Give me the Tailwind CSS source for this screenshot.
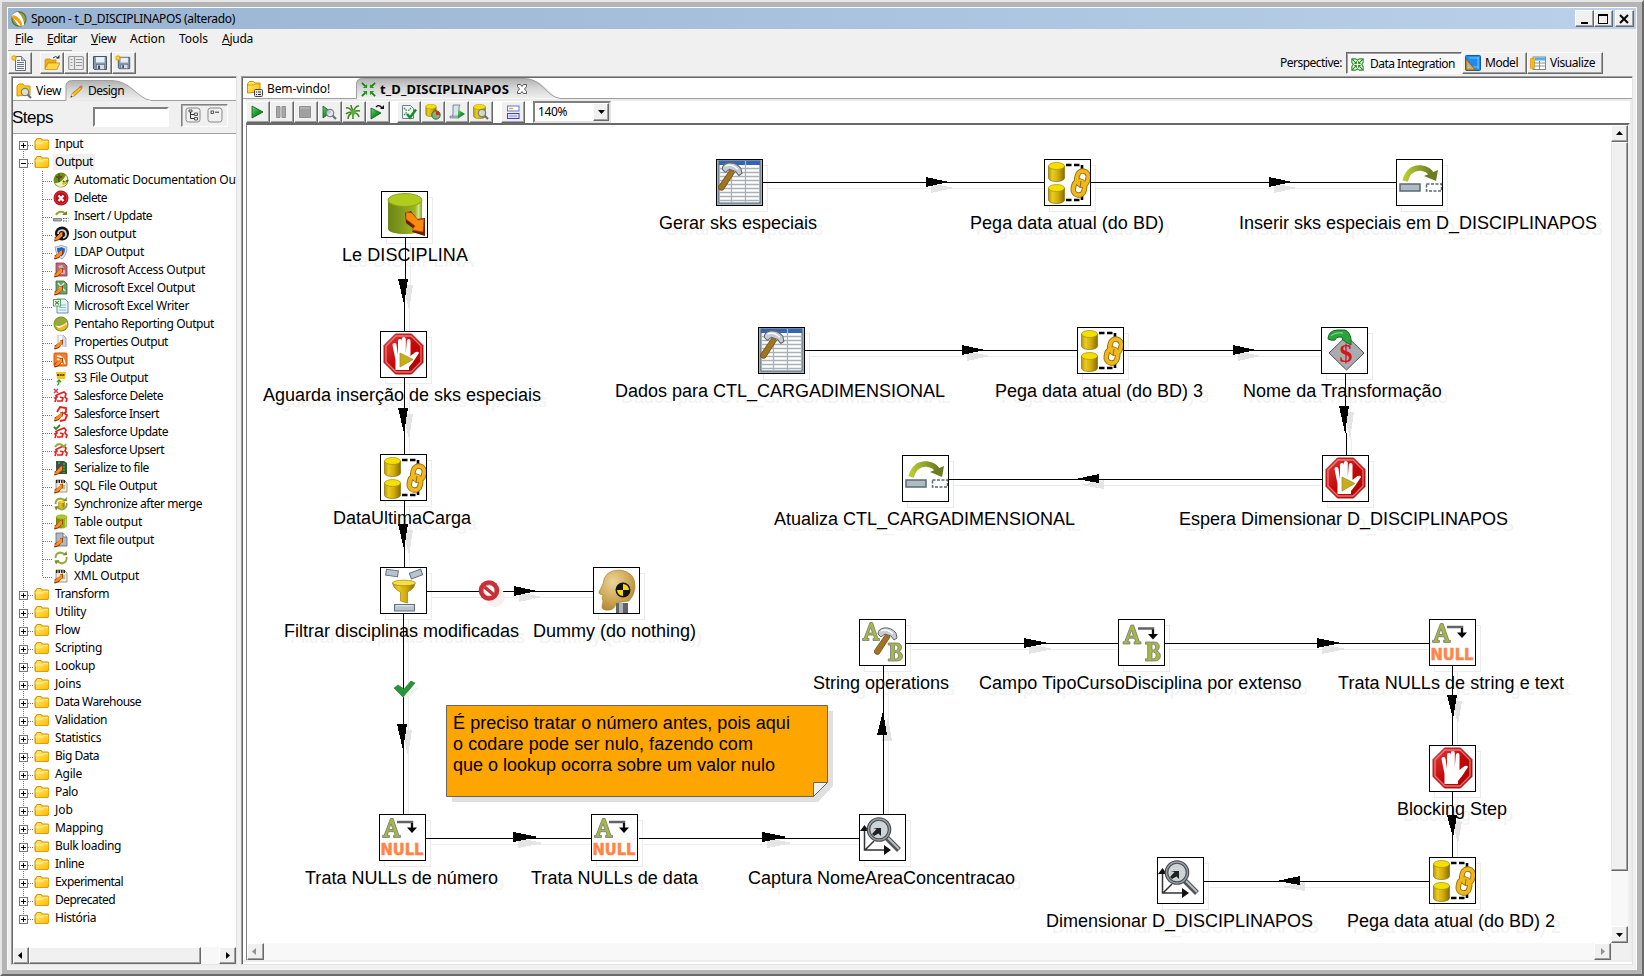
<!DOCTYPE html>
<html lang="pt">
<head>
<meta charset="utf-8">
<title>Spoon - t_D_DISCIPLINAPOS (alterado)</title>
<script src="https://cdn.jsdelivr.net/npm/@tailwindcss/browser@4"></script>
</head>
<body class="overflow-hidden bg-[#f0f0f0] font-['Noto_Sans','Open_Sans',sans-serif] text-[12px] leading-4 text-black">
<svg class="absolute h-0 w-0" aria-hidden="true">
<defs>
<linearGradient id="gold" x1="0" x2="1" y1="0" y2="0"><stop offset="0" stop-color="#b8960a"/><stop offset=".25" stop-color="#e8cc20"/><stop offset=".6" stop-color="#d0ac0c"/><stop offset="1" stop-color="#8a6c04"/></linearGradient>
<linearGradient id="grn" x1="0" x2="1" y1="0" y2="0"><stop offset="0" stop-color="#6e8418"/><stop offset=".3" stop-color="#7c941a"/><stop offset=".8" stop-color="#9cb820"/><stop offset=".9" stop-color="#d4e48a"/><stop offset="1" stop-color="#8ca01c"/></linearGradient>
<linearGradient id="fold" x1="0" x2="1" y1="0" y2="1"><stop offset="0" stop-color="#fff07c"/><stop offset="1" stop-color="#ffb800"/></linearGradient>
<linearGradient id="red" x1="0" x2="1" y1="0" y2="1"><stop offset="0" stop-color="#e04040"/><stop offset=".5" stop-color="#c40808"/><stop offset="1" stop-color="#a80000"/></linearGradient>
<linearGradient id="play" x1="0" x2="1" y1="0" y2="1"><stop offset="0" stop-color="#7cd07c"/><stop offset=".5" stop-color="#1c9a2c"/><stop offset="1" stop-color="#0a6a14"/></linearGradient>
<linearGradient id="tab" x1="0" x2="0" y1="0" y2="1"><stop offset="0" stop-color="#b0b0b0"/><stop offset=".45" stop-color="#d4d4d4"/><stop offset="1" stop-color="#f0f0f0"/></linearGradient>
<linearGradient id="oliv" x1="0" x2="1" y1="0" y2="0"><stop offset="0" stop-color="#b8cc30"/><stop offset="1" stop-color="#6c7c20"/></linearGradient>
<radialGradient id="skin" cx=".4" cy=".3" r=".8"><stop offset="0" stop-color="#ecd49c"/><stop offset=".6" stop-color="#cca450"/><stop offset="1" stop-color="#a8802c"/></radialGradient>

<symbol id="cyl" viewBox="0 0 17 20"><path d="M.5 4v12c0 2 3.500 3.500 8 3.500s8-1.500 8-3.500V4z" fill="url(#gold)" stroke="#8a7208" stroke-width=".7"/><ellipse cx="8.500" cy="4" rx="8" ry="3.500" fill="#f4e000" stroke="#a88c08" stroke-width=".7"/></symbol>
<symbol id="hammer" viewBox="0 0 24 30"><path d="M12 8l4 3L5 28q-2 1-4-.500-1-1-.5-3z" fill="#a07420" stroke="#6c4c10" stroke-width=".8"/><path d="M4 8q0-5 6-6 7-1 12 5l1 5-3 2-3-4-6-2-4 3z" fill="#c8ccd0" stroke="#60686c" stroke-width="1"/><path d="M7 5q6-3 12 3" fill="none" stroke="#fff" stroke-width="1.300"/></symbol>
<symbol id="letA" viewBox="0 0 18 20"><path d="M8 1h2.500l5.500 16h1.500v2H11v-2h1.500l-1-3.500H6L5 17h2v2H.5v-2H2zM8.500 6l-2 5.500h4z" fill="#a8b840" stroke="#7c8480" stroke-width=".9"/></symbol>
<symbol id="letB" viewBox="0 0 16 20"><path d="M.8 1H9q5 0 5 4.500 0 3-3 4 4 1 4 4.500 0 5-6 5H.8v-2H3V3H.8zM7 3v5.500h1.500q2-.3 2-2.700T8.500 3zm0 7.500V17h1.700q2.300-.3 2.300-3.200T8.700 10.500z" fill="#a8b840" stroke="#7c8480" stroke-width=".9"/></symbol>
<symbol id="bend" viewBox="0 0 22 16"><path d="M1 3h15v5" fill="none" stroke="#606468" stroke-width="2.500"/><path d="M16 4v6" stroke="#111" stroke-width="2"/><path d="M11 8.500h10l-5 5.500z" fill="#000"/></symbol>

<symbol id="n-tablein" viewBox="0 0 47 47"><path d="M7 9v29c0 3 8 5 17 5s17-2 17-5V9z" fill="url(#grn)"/><ellipse cx="24" cy="9" rx="17" ry="6.500" fill="#b0cc1c" stroke="#90a41c"/><path d="M24 22l6-2 6 8 8-1v18l-13-4 2-3-8-6z" fill="#6c1c00"/><path d="M25 21l6 1 6 7 6-1-1 13-11-2 3-4-9-7z" fill="#f88a10" stroke="#b84400" stroke-width=".7"/></symbol>
<symbol id="n-stop" viewBox="0 0 47 47"><path d="M15.500 3h16L43 14.500v17L31.500 43h-16L4 31.500v-17z" fill="url(#red)" stroke="#b41c1c"/><path d="M16 5h15L41 15v16L31 41H16L6 31V15z" fill="none" stroke="#f09090" stroke-width="1.300" opacity=".8"/><path d="M15.500 39V29l-3-15q0-2 2-2t2 2L18 24V10q0-2 2-2t1.800 2v12V8q.2-2 2-2t2 2v14l1-12q.2-2 2-2t1.700 2V25l5-4q3-1 3.500 1L33 31l-4 5v3z" fill="#fff"/></symbol>
<symbol id="n-block" viewBox="0 0 47 47"><use href="#n-stop" width="47" height="47"/><path d="M20 22l13 6.500L20 36z" fill="#c8ac1c" stroke="#a08818" stroke-width=".7"/></symbol>
<symbol id="n-seq" viewBox="0 0 47 47"><path d="M22 6h16v8M22 41h16v-7" fill="none" stroke="#000" stroke-width="2.600" stroke-dasharray="5.500 2.500"/><use href="#cyl" x="4" y="3" width="17" height="20"/><use href="#cyl" x="4" y="25" width="17" height="20"/><g fill="none" stroke="#987008" stroke-width="5.500"><rect x="33" y="12" width="11" height="14" rx="5.500" transform="rotate(12 38 19)"/><rect x="29.500" y="22" width="11" height="14" rx="5.500" transform="rotate(12 35 29)"/></g><g fill="none" stroke="#f0b81c" stroke-width="3.700"><rect x="33" y="12" width="11" height="14" rx="5.500" transform="rotate(12 38 19)"/><rect x="29.500" y="22" width="11" height="14" rx="5.500" transform="rotate(12 35 29)"/></g><path d="M37 22l-1 7" stroke="#987008" stroke-width="1"/></symbol>
<symbol id="n-filter" viewBox="0 0 47 47"><g fill="#b8c4cc" stroke="#60707c"><rect x="6" y="3" width="12" height="6" transform="rotate(8 12 6)"/><rect x="30" y="4" width="12" height="6" transform="rotate(-20 36 7)"/><rect x="14.500" y="37.500" width="20" height="6.500"/></g><path d="M16 38.800h17" stroke="#e8f0f4"/><path d="M12.500 16q1 6 8 9v9l7 2V25q7-3 7.500-9z" fill="url(#gold)" stroke="#a08008" stroke-width=".7"/><ellipse cx="24" cy="16" rx="11.500" ry="2.800" fill="#f4e040" stroke="#a08008" stroke-width=".7"/></symbol>
<symbol id="n-dummy" viewBox="0 0 47 47"><path d="M23 36h12v11H23z" fill="#606468"/><path d="M26 36h4v11h-4z" fill="#b0b4b8"/><path d="M10 17Q11 3 27 3q16 2 15 18-1 8-6 13l-13 2q-1 6-6 7-9 1-8-4l1-5-1-3 1-3q-5-1-4-3z" fill="url(#skin)" stroke="#a08030" stroke-width=".6"/><circle cx="30" cy="23" r="7.500" fill="#111"/><path d="M30 23v-6a6 6 0 0 1 6 6zM30 23v6a6 6 0 0 1-6-6z" fill="#f8d810"/></symbol>
<symbol id="n-null" viewBox="0 0 47 47"><use href="#letA" x="2.500" y="3.500" width="20" height="21"/><use href="#bend" x="17" y="5" width="22" height="16"/><text x="1.500" y="40.500" font-family="DejaVu Sans, sans-serif" font-weight="700" font-size="15" textLength="43" lengthAdjust="spacingAndGlyphs" fill="#ff8448" stroke="#ff8448" stroke-width=".5">NULL</text></symbol>
<symbol id="n-map" viewBox="0 0 47 47"><use href="#letA" x="4" y="5" width="20" height="21"/><use href="#bend" x="19" y="6.500" width="22" height="16"/><use href="#letB" x="26" y="22" width="18" height="21"/></symbol>
<symbol id="n-strop" viewBox="0 0 47 47"><use href="#letA" x="2.500" y="2.500" width="19" height="20"/><use href="#hammer" x="15" y="7" width="24" height="30"/><use href="#letB" x="28" y="23" width="17" height="20"/></symbol>
<symbol id="n-grid" viewBox="0 0 47 47"><rect x="1" y="1" width="45" height="45" fill="#a4b4bc"/><rect x="3" y="2" width="41" height="42" fill="#fff" stroke="#506070"/><rect x="3" y="2" width="41" height="4" fill="#3464b8"/><path d="M3 9.500h41M3 13.500h41M3 17.500h41M3 21.500h41M3 25.500h41M3 29.500h41M3 33.500h41M3 37.500h41M3 41.500h41M15.500 6v38M29.500 2v42" stroke="#a8b0b8" stroke-width="1.300"/><use href="#hammer" x="2" y="2" width="25" height="31"/></symbol>
<symbol id="n-upd" viewBox="0 0 47 47"><path d="M9 22Q13 8 25 9q8 1 11 7" fill="none" stroke="url(#oliv)" stroke-width="5.500"/><path d="M28 17l14-6-2 11z" fill="#6c7c20"/><rect x="4" y="25" width="20" height="7" fill="#b0bcc4" stroke="#586874" stroke-width="1.500"/><rect x="30.500" y="25" width="15" height="7" fill="none" stroke="#586874" stroke-width="1.500" stroke-dasharray="3 1.500"/></symbol>
<symbol id="n-var" viewBox="0 0 47 47"><path d="M25.500 9L43 26 25.500 43 8 26z" fill="#a8acb0" stroke="#505458"/><text x="18.500" y="35" font-family="Liberation Serif, serif" font-weight="700" font-size="26" fill="#d81414">$</text><path d="M7 12Q7 4 16 3l8 0q5 2 6 9v6q-6-3-9-6 2-2-3-2-3 0-4 3-4 1-7-1z" fill="#2ca43c" stroke="#106820"/><path d="M10 9q4-4 12-3" fill="none" stroke="#90e098"/></symbol>
<symbol id="n-dim" viewBox="0 0 47 47"><path d="M5.500 13v23h22M6 36l9-9" fill="none" stroke="#333" stroke-width="1.500"/><path d="M1 17l4.500-6 4.500 6zM25 31l7 5-7 5z" fill="#111"/><circle cx="20" cy="15.500" r="10.500" fill="#ccd4d8" stroke="#484c50" stroke-width="3.600"/><circle cx="20" cy="15.500" r="10.500" fill="none" stroke="#989ca0" stroke-width="1.300"/><path d="M28 24l12 12" stroke="#505458" stroke-width="5.500"/><path d="M29 24l11 11" stroke="#b8bcc0" stroke-width="2"/><path d="M14 14h8v8l-2.500-2.500L15 22l-2-2 4.500-5z" fill="#222"/></symbol>

<symbol id="folder" viewBox="0 0 16 14"><path d="M1 3.500L3 1h4l1.500 1.500H14l1 1v8L14 13H1.500l-1-1.500V4z" fill="#d89000"/><path d="M1.500 5L3.500 2h3L8 3.500h6l.5 1v7l-1 .8H2z" fill="url(#fold)"/><path d="M1.500 6h7l1-1.300H14" stroke="#fff8a8" fill="none" stroke-width=".8"/></symbol>
<symbol id="arr" viewBox="0 0 16 16"><path d="M1 15l1-2.500-1-.5 7-4.500-1.500-.800L10 5.500l-.2 5-1.500.3L6 14l-4 1.500z" fill="#8a3400"/><path d="M1.500 14.300L2.500 12l4.500-4.500-.3-.6 2.500-.6-.2 4L5 13.500z" fill="#ff8c1c"/></symbol>
<symbol id="i-auto" viewBox="0 0 16 16"><circle cx="8" cy="8" r="7.500" fill="#74881c"/><path d="M2 11q6 1 11-8l2 5q-1 6-7 7-4 0-6-4z" fill="#f4f0c0"/><path d="M6 2v8M3 5h6M10 9l2 2 3-3" stroke="#0c7a1c" stroke-width="1.800" fill="none"/><circle cx="6" cy="5" r="1.500" fill="#c81c0c"/><path d="M9 11l4-2 1 2-4 2z" fill="#e8b818"/></symbol>
<symbol id="i-del" viewBox="0 0 16 16"><circle cx="8" cy="8" r="7.500" fill="#c00c14"/><circle cx="8" cy="8" r="6" fill="none" stroke="#e05050" stroke-width=".6"/><path d="M5.500 5.500l5 5.500M10.500 5.500l-5 5.500" stroke="#fff" stroke-width="2.300"/></symbol>
<symbol id="i-ins" viewBox="0 0 16 16"><path d="M3 7q2-4 7-3l2 2" fill="none" stroke="#98a830" stroke-width="2"/><path d="M9 7h5V3z" fill="#78882c"/><path d="M.5 10.500h8v2.500h-8z" fill="#a8b0b4" stroke="#687078" stroke-width=".8"/><path d="M10 10.500h5.500M10 13h5.500" stroke="#586068" stroke-dasharray="1.500 1" stroke-width="1.200"/></symbol>
<symbol id="i-json" viewBox="0 0 16 16"><circle cx="9" cy="7.500" r="7" fill="#111"/><path d="M5 8a4 4 0 1 1 5 4" fill="none" stroke="#d0d0d0" stroke-width="1.800"/><use href="#arr" width="16" height="16"/></symbol>
<symbol id="i-ldap" viewBox="0 0 16 16"><path d="M2 3q4 0 6-2 3 2 6 2 0 8-5 12-6-3-7-12z" fill="#e0e8f8" stroke="#a0a8b8"/><path d="M4 4q3 0 4.500-1Q10 4 12 4.500q0 5-3.500 8Q4 10 4 4z" fill="#1464e0"/><use href="#arr" width="16" height="16"/></symbol>
<symbol id="i-acc" viewBox="0 0 16 16"><path d="M3 1h8l3 3v10H3z" fill="#b86878" stroke="#804050" stroke-width=".8"/><path d="M5 4l4-1 2 3-4 1zM8 8h4v4H8z" fill="#e0b0b8"/><use href="#arr" width="16" height="16"/></symbol>
<symbol id="i-xls" viewBox="0 0 16 16"><path d="M3 1h8l3 3v10H3z" fill="#68a068" stroke="#386838" stroke-width=".8"/><path d="M5 3l7 8M11 3l-5 6" stroke="#d0e8d0" stroke-width="1.500"/><use href="#arr" width="16" height="16"/></symbol>
<symbol id="i-xlw" viewBox="0 0 16 16"><path d="M4 1h8l3 3v11H4z" fill="#e8f4fc" stroke="#6090b0"/><path d="M6 7h7M6 9.500h7M6 12h7" stroke="#90b8d0"/><rect x=".5" y="1.500" width="7" height="6.500" fill="#fff" stroke="#58a058"/><path d="M2 3l4 3.500M6 3L2 6.500" stroke="#389838" stroke-width="1.200"/></symbol>
<symbol id="i-pent" viewBox="0 0 16 16"><circle cx="8" cy="8" r="7.500" fill="#78881c"/><circle cx="8" cy="8" r="6.800" fill="#98a838"/><path d="M2 9q5 3 12-3 .5 4-3 6.500-5 2-9-3.500z" fill="#fff4b0"/><path d="M3 12q5 1 10-4l1 2q-2 4-6 4.500-3 0-5-2.500z" fill="#f0b820"/></symbol>
<symbol id="i-prop" viewBox="0 0 16 16"><path d="M4 1h6l3 3v9H4z" fill="#d4d8e8"/><path d="M6 2h3v10H6z" fill="#fff"/><path d="M10 1l3 3v9" stroke="#a8acc8" fill="none"/><use href="#arr" width="16" height="16"/></symbol>
<symbol id="i-rss" viewBox="0 0 16 16"><rect x="1" y="1" width="13" height="13" rx="1" fill="#f08030" stroke="#d06010"/><path d="M4 4q7 0 8 8M4 7q4 1 5 5" fill="none" stroke="#fff" stroke-width="1.500"/><use href="#arr" width="16" height="16"/></symbol>
<symbol id="i-s3" viewBox="0 0 16 16"><path d="M3 2h10l-1 7H4z" fill="#f4c818"/><path d="M4 5h8" stroke="#604800" stroke-width="2" stroke-dasharray="2 .7"/><path d="M4 15q2 0 2-4M4 12l2-2 2 2" stroke="#38a020" fill="none" stroke-width="1.300"/></symbol>
<symbol id="sfa" viewBox="0 0 16 16"><path d="M2 14l1-3-1-1 2-1-1-1.500 3-1.500 5-2 2 2-1 3 2 2-1 3M4 13h5l1-3-3-1" fill="none" stroke="#ec1c1c" stroke-width="1.700"/></symbol>
<symbol id="i-sfd" viewBox="0 0 16 16"><use href="#sfa" width="16" height="16"/><path d="M1 1l4 4M5 1L1 5" stroke="#d04050" stroke-width="1.500"/></symbol>
<symbol id="i-sfi" viewBox="0 0 16 16"><path d="M4 6L7 1l6 1v4l-2 1 3 2-2 5-5 1" fill="none" stroke="#ec1c1c" stroke-width="1.800"/><use href="#arr" width="16" height="16"/></symbol>
<symbol id="i-sfu" viewBox="0 0 16 16"><use href="#sfa" width="16" height="16"/><path d="M1 3l2 2 4-4" stroke="#189030" stroke-width="1.800" fill="none"/></symbol>
<symbol id="i-sfp" viewBox="0 0 16 16"><use href="#sfa" width="16" height="16"/><path d="M2 5q4-6 9 0l2-3" stroke="#98a840" stroke-width="2" fill="none"/></symbol>
<symbol id="i-ser" viewBox="0 0 16 16"><path d="M3 1h8l3 2v11H3z" fill="#405048"/><path d="M11 3v10M5 3h3" stroke="#20b020" stroke-width="2" stroke-dasharray="2 1"/><use href="#arr" width="16" height="16"/></symbol>
<symbol id="i-sql" viewBox="0 0 16 16"><path d="M3 2h8l3 3v9H3z" fill="#f0ead8" stroke="#888068" stroke-width=".8"/><path d="M3 3.500h9" stroke="#222" stroke-width="3" stroke-dasharray="1.500 1"/><path d="M10 8h2M10 10h2" stroke="#908870"/><use href="#arr" width="16" height="16"/></symbol>
<symbol id="i-upd" viewBox="0 0 16 16"><path d="M2.500 8q0-5 5-5.500l4 1.500M13.500 7q1 5-4.500 6.500L5 12" fill="none" stroke="#98a838" stroke-width="1.900"/><path d="M10 5.500l4-.500-.500-4zM6.500 10l-5 .5 1.500 4z" fill="#788828"/></symbol>
<symbol id="i-syn" viewBox="0 0 16 16"><use href="#i-upd" width="16" height="16"/><use href="#cyl" x="5" y="4.500" width="7" height="7.500"/></symbol>
<symbol id="i-tab" viewBox="0 0 16 16"><path d="M3 3v10q5 3 11 0V3z" fill="url(#grn)"/><ellipse cx="8.500" cy="3" rx="5.500" ry="2.200" fill="#b0c828" stroke="#88981c" stroke-width=".5"/><use href="#arr" width="16" height="16"/></symbol>
<symbol id="i-txt" viewBox="0 0 16 16"><path d="M3 1h7l4 4v9H3z" fill="#b0b8c0" stroke="#606870" stroke-width=".8"/><path d="M10 1v4h4" fill="#f0f4f8" stroke="#606870" stroke-width=".8"/><use href="#arr" width="16" height="16"/></symbol>

<symbol id="t-page" viewBox="0 0 16 16"><path d="M4.500 1.500h6l4 4v10h-10z" fill="#f4f8fc" stroke="#607080"/><path d="M10.500 1.500v4h4" fill="#c0ccd8" stroke="#607080" stroke-width=".8"/><path d="M6 5.500h3M6 7.500h7M6 9.500h7M6 11.500h7M6 13.500h7" stroke="#586878" stroke-width=".9"/></symbol>
<symbol id="star" viewBox="0 0 6 6"><path d="M3 0v6M0 3h6M.8.800l4.400 4.400M5.200.800L.8 5.200" stroke="#e0a400" stroke-width="1.100"/><circle cx="3" cy="3" r="1.500" fill="#ffd820"/></symbol>
<symbol id="t-new" viewBox="0 0 16 16"><use href="#t-page" width="16" height="16"/><use href="#star" width="6" height="6"/></symbol>
<symbol id="t-open" viewBox="0 0 16 16"><path d="M1 14V5l1-1h4l1 1h5v3H4z" fill="#f0b010" stroke="#c88400" stroke-width=".7"/><path d="M1 14.500L4 8h12l-3 6.500z" fill="#ffd848" stroke="#c88400" stroke-width=".7"/><path d="M9 3q3-3 5 0" fill="none" stroke="#303030"/><path d="M12 3.500h3.500V0z" fill="#303030"/></symbol>
<symbol id="t-exp" viewBox="0 0 16 16"><rect x=".7" y="1.500" width="14.600" height="13" rx="1" fill="#ececec" stroke="#989898" stroke-width="1.200"/><path d="M2.500 4.500h2M2.500 7.500h2M2.500 10.500h2M8 4.500h6M8 7.500h6M8 10.500h6M6.500 2v12" stroke="#989898" stroke-width="1.200"/></symbol>
<symbol id="t-save" viewBox="0 0 16 16"><path d="M1.500 1.500h13v13h-12l-1-1z" fill="#8898a8" stroke="#405468"/><rect x="4" y="2" width="8.500" height="5.500" fill="#e8f0f4"/><rect x="4.500" y="9.500" width="8" height="5" fill="#d4dce4" stroke="#506070" stroke-width=".6"/><rect x="6" y="10.500" width="2" height="3.500" fill="#34506c"/></symbol>
<symbol id="t-saveas" viewBox="0 0 16 16"><use href="#t-save" x="2" y="1" width="14" height="14"/><use href="#star" width="6" height="6"/></symbol>
<symbol id="mag" viewBox="0 0 12 12"><path d="M7.500 7.500L11 11" stroke="#687078" stroke-width="2.200"/><circle cx="5" cy="5" r="3.700" fill="#d8e8f0" fill-opacity=".8" stroke="#788088" stroke-width="1.200"/></symbol>
<symbol id="t-view" viewBox="0 0 16 16"><path d="M1 13V3l2-2h4l1.500 2H14v9z" fill="#ffc820" stroke="#d89000"/><use href="#mag" x="4" y="4" width="12" height="12"/></symbol>
<symbol id="t-pen" viewBox="0 0 16 16"><path d="M2 14l1.500-4L12 3l1.500 2L6 12.500z" fill="#f8c018" stroke="#a06810" stroke-width=".8"/><path d="M11 3l1.300-1.300q1.400-.6 2.400.8L13.500 5z" fill="#e86858"/><path d="M2 14l1.300-3.700 2.200 2.200z" fill="#f8e0b8"/><path d="M1.500 14.500l1-2 1.200 1.100z" fill="#222"/></symbol>
<symbol id="t-play" viewBox="0 0 16 16"><path d="M3 2l11 6L3 14z" fill="url(#play)" stroke="#0c5c14" stroke-width=".8"/></symbol>
<symbol id="t-pause" viewBox="0 0 16 16"><path d="M3.500 2.500h3.500v11H3.500zM9 2.500h3.500v11H9z" fill="#a8a8a8" stroke="#909090"/></symbol>
<symbol id="t-stop" viewBox="0 0 16 16"><path d="M2.500 2.500h11v11h-11z" fill="#a0a0a0" stroke="#909090"/><path d="M3.500 4h9" stroke="#c8c8c8"/></symbol>
<symbol id="t-prev" viewBox="0 0 16 16"><path d="M2 2l8 6-8 6z" fill="url(#play)" stroke="#0c5c14" stroke-width=".8"/><use href="#mag" x="4" y="4" width="12" height="12"/></symbol>
<symbol id="t-bug" viewBox="0 0 16 16"><path d="M1 4q3-1 6 3M6 1q0 3 2 5M14 2q-4 0-5 5M1 10q3-3 7-1M15 7q-3-1-6 1M3 15q0-4 4-6M8 15V9M14 13q-1-4-5-4" fill="none" stroke="#38841c" stroke-width="1.500"/><circle cx="8.500" cy="8" r="2.600" fill="#60b030"/></symbol>
<symbol id="t-replay" viewBox="0 0 16 16"><path d="M2 4l10 5L2 15z" fill="url(#play)" stroke="#0c5c14" stroke-width=".8"/><path d="M7 3q3-3 6 1" fill="none" stroke="#111" stroke-width="1.300"/><path d="M11 5h4V1z" fill="#111"/></symbol>
<symbol id="t-check" viewBox="0 0 16 16"><path d="M1.500 1.500h8l3 3v10h-11z" fill="#f0f4f8" stroke="#708090"/><path d="M3 4l3 3M10 4L7 7M3 11l3-3" stroke="#289038" stroke-width="1.300" stroke-dasharray="1.500 .700"/><path d="M6 10l3 3.500 6-8" stroke="#1c8c28" stroke-width="2.600" fill="none"/></symbol>
<symbol id="t-imp" viewBox="0 0 16 16"><use href="#cyl" x="0" y="0" width="12" height="13"/><circle cx="11" cy="11" r="4.200" fill="#78b878" stroke="#406840"/><path d="M11 11V7a4 4 0 0 1 4 4z" fill="#e02818"/></symbol>
<symbol id="t-sql" viewBox="0 0 16 16"><path d="M4 1h7q-1 1-1 3v9H2q2-1 2-3z" fill="#d8e4ec" stroke="#607080" stroke-width=".8"/><path d="M1 12h9v2H1z" fill="#b0bcc8" stroke="#607080" stroke-width=".6"/><path d="M9 5.500l7 4.500-7 4.500z" fill="url(#play)"/></symbol>
<symbol id="t-db" viewBox="0 0 16 16"><use href="#cyl" x="0" y="0" width="13" height="15"/><use href="#mag" x="4" y="4" width="12" height="12"/></symbol>
<symbol id="t-res" viewBox="0 0 16 16"><rect x="2.500" y="2" width="11.500" height="5" fill="#fff" stroke="#6870d8"/><path d="M4 4.500h4" stroke="#f0a820" stroke-width="1.500"/><rect x="2.500" y="9.500" width="11.500" height="5" fill="#e4e8ff" stroke="#3840d8"/><path d="M4 12h8" stroke="#8088d8"/></symbol>
<symbol id="t-welcome" viewBox="0 0 16 16"><path d="M.5 12V3l2-2.500h4L8 2h5v9z" fill="url(#fold)" stroke="#d09000"/><path d="M1 4h6l1-1h5" stroke="#e0a000" fill="none"/><rect x="7.500" y="8.500" width="8" height="7" rx="1" fill="#e8e8e8" stroke="#444"/><path d="M9 11h1M11 11h3M9 13.500h1M11 13.500h3" stroke="#222"/></symbol>
<symbol id="t-trans" viewBox="0 0 16 16"><path d="M1 1l4 4M15 1l-4 4M1 15l4-4M15 15l-4-4" stroke="#20801c" stroke-width="1.900"/><path d="M6.500 2v4.500H2zM9.500 2v4.500H14zM6.500 14V9.500H2zM9.500 14V9.500H14z" fill="#289828"/></symbol>
<symbol id="t-di" viewBox="0 0 16 16"><path d="M2 2h4l2 1.500L10 2h4v4l-1.500 2 1.500 2v4h-4l-2-1.500L6 14H2v-4l1.500-2L2 6z" fill="#fff" stroke="#289028" stroke-width="1.200"/><path d="M2.500 2.500l4 4M13.500 2.500l-4 4M2.500 13.500l4-4M13.500 13.500l-4-4" stroke="#20801c" stroke-width="1.100"/><path d="M7 4.500V7H4.500M9 4.500V7h2.500M7 11.500V9H4.500M9 11.500V9h2.500" fill="none" stroke="#20801c"/></symbol>
<symbol id="t-model" viewBox="0 0 16 16"><rect x=".5" y=".5" width="15" height="15" rx="1" fill="#1c8cf0" stroke="#0c5cb0"/><path d="M4 3h10M4 12h10M13 2v12" stroke="#90d0ff" stroke-width=".8"/><path d="M1 4l9.500 11H1z" fill="#e0a040" stroke="#905810" stroke-width=".8"/><path d="M3 9l3.500 4H3z" fill="#8cc8f0"/></symbol>
<symbol id="t-vis" viewBox="0 0 16 16"><rect x="3" y="2" width="12.500" height="12.500" fill="#fff" stroke="#888"/><path d="M.5 3.500h4v10h-4z" fill="#f8b818" stroke="#d09000" stroke-width=".6"/><rect x="5" y="2.500" width="10" height="3" fill="#4cb4e8"/><path d="M4 8h11M4 11h11M9.500 6v8" stroke="#909090"/></symbol>
<symbol id="t-tree" viewBox="0 0 16 16"><rect x="1" y="1" width="14" height="14" rx="2.500" fill="#f0f0f0" stroke="#888"/><path d="M5.500 4v7.500h4M5.500 7.500h4" stroke="#333" fill="none"/><path d="M4 3h3v2H4zM9.500 6h3v2.500h-3zM9.500 10.500h3V13h-3z" fill="#eee" stroke="#333" stroke-width=".8"/></symbol>
<symbol id="t-col" viewBox="0 0 16 16"><rect x="1" y="1" width="14" height="14" rx="2.500" fill="#f0f0f0" stroke="#888"/><rect x="4" y="4" width="2.500" height="2.500" fill="none" stroke="#333" stroke-width=".8"/><path d="M8 5.200h4" stroke="#333"/></symbol>
</defs>
</svg>

<div class="flex h-[976px] w-[1644px] flex-col border-2 border-t-[#e6e6e6] border-r-[#696969] border-b-[#696969] border-l-[#e6e6e6] bg-[#b4b4b4] pt-[5px] pr-[5px] pb-[4px] pl-[5px]">
<div class="flex min-h-0 flex-1 flex-col border border-[#fafafa] bg-[#f0f0f0]">

  <header class="flex h-[21px] shrink-0 items-center bg-linear-to-r from-[#99b4d1] to-[#b9d1ea] pr-[2px] pl-[3px]">
    <svg class="size-4" viewBox="0 0 16 16"><circle cx="8" cy="8" r="7.700" fill="#606c28"/><circle cx="8" cy="8" r="6.500" fill="#98a050"/><path d="M1 5q2-4 6-4 6 6 6 13-3 2-6 0z" fill="#fff"/><path d="M2.500 4q7 2 9 10.500l-2 1Q7 9 1 7z" fill="#f8a008"/></svg>
    <span class="ml-1 flex-1 whitespace-nowrap"><span data-w="204">Spoon - t_D_DISCIPLINAPOS (alterado)</span></span>
    <div class="flex">
      <span class="flex h-[17px] w-[19px] items-center justify-center border border-t-white border-r-[#696969] border-b-[#696969] border-l-white bg-[#f0f0f0] shadow-[inset_-1px_-1px_#a0a0a0]"><svg class="h-3 w-3" viewBox="0 0 12 12"><path d="M2 9h7v2H2z"/></svg></span>
      <span class="flex h-[17px] w-[19px] items-center justify-center border border-t-white border-r-[#696969] border-b-[#696969] border-l-white bg-[#f0f0f0] pr-px shadow-[inset_-1px_-1px_#a0a0a0]"><svg class="h-3 w-3" viewBox="0 0 12 12" shape-rendering="crispEdges"><path d="M1 1h10v10H1zM2 3v7h8V3z" fill-rule="evenodd"/></svg></span>
      <span class="ml-[2px] flex h-[17px] w-[19px] items-center justify-center border border-t-white border-r-[#696969] border-b-[#696969] border-l-white bg-[#f0f0f0] pr-px shadow-[inset_-1px_-1px_#a0a0a0]"><svg class="h-3 w-3" viewBox="0 0 12 12"><path d="M2 2l8 8M10 2l-8 8" stroke="#000" stroke-width="2"/></svg></span>
    </div>
  </header>

  <nav class="flex h-[21px] shrink-0 items-center gap-[14px] pb-px pl-[7px] whitespace-nowrap">
    <span data-w="18"><u>F</u>ile</span><span data-w="30"><u>E</u>ditar</span><span data-w="25"><u>V</u>iew</span><span data-w="35">Action</span><span data-w="29">Tools</span><span data-w="31"><u>A</u>juda</span>
  </nav>

  <div class="flex h-[26px] shrink-0 items-start">
    <div class="h-[26px] w-16 border-t border-[#a0a0a0] pt-px">
      <div class="flex w-[130px]" id="mainbar"></div>
    </div>
    <div class="ml-auto flex items-center pt-[2px] pr-[33px] whitespace-nowrap">
      <span class="mr-1" data-w="62">Perspective:</span>
      <span class="flex h-[22px] w-[116px] items-center gap-[5px] border border-t-[#696969] border-r-white border-b-white border-l-[#696969] bg-[#f8f8f8] pt-[2px] pl-[3px] shadow-[inset_1px_1px_#a0a0a0]"><svg class="size-[15px]"><use href="#t-di"/></svg><span data-w="85">Data Integration</span></span>
      <span class="flex h-[22px] w-[65px] items-center gap-[4px] border border-t-white border-r-[#696969] border-b-[#696969] border-l-white pl-[2px] shadow-[inset_-1px_-1px_#a0a0a0]"><svg class="size-4"><use href="#t-model"/></svg><span data-w="33">Model</span></span>
      <span class="flex h-[22px] w-[76px] items-center gap-[4px] border border-t-white border-r-[#696969] border-b-[#696969] border-l-white pl-[2px] shadow-[inset_-1px_-1px_#a0a0a0]"><svg class="size-4"><use href="#t-vis"/></svg><span data-w="45">Visualize</span></span>
    </div>
  </div>

  <main class="flex min-h-0 flex-1 gap-[4px] pr-[3px] pb-[4px] pl-[3px]">
    <aside class="flex w-[226px] flex-col border border-t-[#a0a0a0] border-r-[#e3e3e3] border-b-[#e3e3e3] border-l-[#a0a0a0]">
      <div class="flex min-h-0 flex-1 flex-col border-t border-l border-[#696969] bg-white">
        <div class="relative flex h-[23px] shrink-0 items-center pt-[3px] whitespace-nowrap">
          <svg class="absolute inset-0 h-[23px] w-[223px]" viewBox="0 0 223 23"><path d="M0 22.500h53V8Q53 2.500 60 2.500h38c20 0 26 18 40 20z" fill="url(#tab)"/><path d="M0 22.500h53V8Q53 2.500 60 2.500h38c20 0 26 18 40 20H223" fill="none" stroke="#a0a0a0"/><path d="M54 22.500h83" stroke="#e8e8e8"/></svg>
          <svg class="relative ml-[3px] size-4"><use href="#t-view"/></svg><span class="relative ml-1"><span data-w="25">View</span></span>
          <svg class="relative ml-[8px] size-[15px]"><use href="#t-pen"/></svg><span class="relative ml-[4px]"><span data-w="36">Design</span></span>
        </div>
        <div class="flex h-[33px] shrink-0 items-center border-b border-[#a0a0a0] bg-[#f0f0f0]">
          <span class="w-[80px] pt-[2px] font-['Liberation_Sans'] text-[17px]"><span class="-ml-px" data-w="41" data-f="17px 'Liberation Sans'">Steps</span></span>
          <span class="h-[20px] w-[76px] border-2 border-t-[#808080] border-r-white border-b-white border-l-[#808080] bg-white"></span>
          <span class="mb-1 ml-[12px] flex h-[23px] w-[47px] items-center gap-[6px] border border-t-[#808080] border-r-white border-b-white border-l-[#808080] pl-[3px] shadow-[inset_1px_1px_#b0b0b0]"><svg class="size-4"><use href="#t-tree"/></svg><svg class="size-4"><use href="#t-col"/></svg></span>
        </div>
        <div id="tree" class="min-h-0 flex-1 overflow-hidden pt-px"></div>
        <div class="flex h-[17px] shrink-0 bg-[#f8f8f8]">
          <span class="flex w-[16px] items-center justify-center border border-t-white border-r-[#696969] border-b-[#696969] border-l-white bg-[#f0f0f0] pr-[3px] shadow-[inset_-1px_-1px_#a0a0a0]"><svg class="h-[7px] w-1" viewBox="0 0 4 7"><path d="M4 0v7L0 3.500z"/></svg></span>
          <span class="w-[172px] border border-t-white border-r-[#696969] border-b-[#696969] border-l-white bg-[#f0f0f0] shadow-[inset_-1px_-1px_#a0a0a0]"></span>
          <span class="ml-auto flex w-[17px] items-center justify-center border border-t-white border-r-[#696969] border-b-[#696969] border-l-white bg-[#f0f0f0] shadow-[inset_-1px_-1px_#a0a0a0]"><svg class="h-[7px] w-1" viewBox="0 0 4 7"><path d="M0 0v7l4-3.500z"/></svg></span>
        </div>
      </div>
    </aside>

    <section class="flex min-w-0 flex-1 flex-col border border-t-[#a0a0a0] border-r-[#e3e3e3] border-b-[#e3e3e3] border-l-[#a0a0a0]">
      <div class="flex min-h-0 flex-1 flex-col border-t border-l border-[#696969] bg-white">
        <div class="relative flex h-[21px] shrink-0 items-center pt-px whitespace-nowrap">
          <svg class="absolute inset-0 h-[21px] w-full" viewBox="243 78 1389 21" preserveAspectRatio="none"><path d="M356.500 98.500V84q0-5.500 6-5.500H524c20 0 24 17 36 20z" fill="url(#tab)"/><path d="M243 98.500h113.500V84q0-5.500 6-5.500H524c18 0 22 18 36 20H1633" fill="none" stroke="#a0a0a0"/></svg>
          <svg class="relative ml-1 size-4"><use href="#t-welcome"/></svg><span class="relative ml-1 w-[90px]"><span data-w="63">Bem-vindo!</span></span>
          <svg class="relative ml-[4px] size-[15px]"><use href="#t-trans"/></svg><span class="relative ml-[4px] text-[13px] font-bold"><span data-w="129" data-f="bold 13px 'Noto Sans'">t_D_DISCIPLINAPOS</span></span>
          <svg class="relative ml-[8px] size-[10px]" viewBox="0 0 10 10"><path d="M.5.500h3L5 2.500 6.500.5h3v2L7.500 5l2 2.500v2h-3L5 7.500 3.500 9.500h-3v-2L2.500 5l-2-2.500z" fill="#fff" stroke="#555"/></svg>
        </div>
        <div class="mb-[2px] flex min-h-0 flex-1 flex-col border-r-2 border-b-2 border-[#ebebeb] pl-[3px]">
          <div class="flex h-[24px] shrink-0 items-center border-t-2 border-[#ebebeb]" id="transbar"></div>
          <div class="flex min-h-0 flex-1 flex-col border-t-2 border-r-2 border-l border-t-[#696969] border-r-[#f0f0f0] border-l-[#808080]">
            <div class="flex min-h-0 flex-1">
              <div id="canvas" class="relative w-[1364px] shrink-0 overflow-hidden bg-white"></div>
              <div class="flex w-[17px] shrink-0 flex-col bg-[#f8f8f8]">
                <span class="flex h-[17px] shrink-0 items-center justify-center border border-t-white border-r-[#696969] border-b-[#696969] border-l-white bg-[#f0f0f0] pb-[2px] shadow-[inset_-1px_-1px_#a0a0a0]"><svg class="h-1 w-[7px]" viewBox="0 0 7 4"><path d="M0 4h7L3.500 0z"/></svg></span>
                <span class="h-[729px] border border-t-white border-r-[#696969] border-b-[#696969] border-l-[#e3e3e3] bg-[#f0f0f0] shadow-[inset_-1px_-1px_#a0a0a0]"></span>
                <span class="mt-auto flex h-[17px] shrink-0 items-center justify-center border border-t-white border-r-[#696969] border-b-[#696969] border-l-white bg-[#f0f0f0] shadow-[inset_-1px_-1px_#a0a0a0]"><svg class="h-1 w-[7px]" viewBox="0 0 7 4"><path d="M0 0h7L3.500 4z"/></svg></span>
              </div>
            </div>
            <div class="flex h-[17px] shrink-0 bg-[#f0f0f0]">
              <div class="flex w-[1364px] bg-[#f8f8f8]">
              <span class="flex w-[17px] items-center justify-center border border-t-white border-r-[#696969] border-b-[#696969] border-l-white bg-[#f0f0f0] pr-[3px] shadow-[inset_-1px_-1px_#a0a0a0]"><svg class="h-[7px] w-1" viewBox="0 0 4 7"><path d="M4 0v7L0 3.500z" fill="#909090"/></svg></span>
              <span class="ml-auto flex w-[17px] items-center justify-center border border-t-white border-r-[#696969] border-b-[#696969] border-l-white bg-[#f0f0f0] shadow-[inset_-1px_-1px_#a0a0a0]"><svg class="h-[7px] w-1" viewBox="0 0 4 7"><path d="M0 0v7l4-3.500z" fill="#909090"/></svg></span>
              </div>
            </div>
          </div>
        </div>
      </div>
    </section>
  </main>
</div>
</div>

<script>
const el = id => document.getElementById(id);
const tool = (id, extra = '') => `<span class="flex h-[22px] w-[24px] shrink-0 items-center justify-center border border-t-white border-r-[#696969] border-b-[#696969] border-l-white bg-[#f0f0f0] shadow-[inset_-1px_-1px_#a0a0a0] ${extra}"><svg class="size-4"><use href="#t-${id}"/></svg></span>`;
el('mainbar').innerHTML = tool('new', 'pr-[2px]') + tool('open', 'ml-[8px]') + tool('exp') + tool('save') + tool('saveas', 'pr-[2px]');
el('transbar').innerHTML = ['play', 'pause', 'stop', 'prev', 'bug', 'replay'].map(i => tool(i, 'pr-[2px]')).join('') + tool('check', 'ml-[7px]') + tool('imp') + tool('sql') + tool('db') + tool('res', 'ml-[8px]') +
  `<span class="ml-[8px] flex h-[22px] w-[78px] items-center border-2 border-t-[#808080] border-r-[#e3e3e3] border-b-[#e3e3e3] border-l-[#808080] bg-white pl-[3px]"><span class="flex-1"><span data-w="29">140%</span></span><span class="flex h-[18px] w-[16px] items-center justify-center border border-t-white border-r-[#696969] border-b-[#696969] border-l-white bg-[#f0f0f0] shadow-[inset_-1px_-1px_#a0a0a0]"><svg class="h-1 w-[7px]" viewBox="0 0 7 4"><path d="M0 0h7L3.500 4z"/></svg></span></span>`;

// Step tree: [label, width] for folders, [label, width, icon] for steps
const tree = [
  ['Input',28],['Output',38],
  ['Automatic Documentation Output',184,'auto'],['Delete',33,'del'],['Insert / Update',78,'ins'],['Json output',62,'json'],['LDAP Output',70,'ldap'],
  ['Microsoft Access Output',131,'acc'],['Microsoft Excel Output',121,'xls'],['Microsoft Excel Writer',115,'xlw'],['Pentaho Reporting Output',140,'pent'],
  ['Properties Output',94,'prop'],['RSS Output',60,'rss'],['S3 File Output',74,'s3'],['Salesforce Delete',89,'sfd'],['Salesforce Insert',85,'sfi'],
  ['Salesforce Update',94,'sfu'],['Salesforce Upsert',90,'sfp'],['Serialize to file',75,'ser'],['SQL File Output',83,'sql'],['Synchronize after merge',128,'syn'],
  ['Table output',68,'tab'],['Text file output',80,'txt'],['Update',38,'upd'],['XML Output',65,'sql'],
  ['Transform',54],['Utility',31],['Flow',25],['Scripting',47],['Lookup',40],['Joins',26],['Data Warehouse',86],['Validation',52],['Statistics',46],['Big Data',44],
  ['Agile',27],['Palo',23],['Job',18],['Mapping',48],['Bulk loading',66],['Inline',29],['Experimental',68],['Deprecated',60],['História',41]];
el('tree').innerHTML = tree.map(([t, w, icon], i) => {
  const last = i === tree.length - 1, endChild = t === 'XML Output';
  if (icon) return `<div class="flex h-[18px] items-center whitespace-nowrap"><svg class="h-[18px] w-[40px] shrink-0" shape-rendering="crispEdges"><path d="M10.500 0v18M29.500 0v${endChild ? 10 : 18}M30 10.500h10" stroke="#777" stroke-dasharray="1 1"/></svg><svg class="size-4 shrink-0"><use href="#i-${icon}"/></svg><span class="ml-[5px]"><span data-w="${w}">${t}</span></span></div>`;
  return `<div class="flex h-[18px] items-center whitespace-nowrap"><svg class="h-[18px] w-[21px] shrink-0" shape-rendering="crispEdges"><path d="M10.500 ${i ? 0 : 10}V${last ? 10 : 18}M15 10.500h6" stroke="#777" stroke-dasharray="1 1"/><rect x="6.500" y="6.500" width="8" height="8" fill="#fff" stroke="#777"/><path d="M8 10.500h5${i === 1 ? '' : 'M10.500 8v5'}" stroke="#000"/></svg><svg class="h-[14px] w-4 shrink-0"><use href="#folder"/></svg><span class="ml-[3px] px-[2px] ${i === 1 ? 'bg-[#f0f0f0]' : ''}"><span data-w="${w}">${t}</span></span></div>`;
}).join('');

// Canvas coordinates are window pixels; OX, OY is the canvas origin
const OX = 247, OY = 125;
const nodes = [
  ['tablein',381,191,'Le DISCIPLINA',342,126],['block',380,331,'Aguarda inserção de sks especiais',263,278],['seq',380,454,'DataUltimaCarga',333,138],
  ['filter',380,567,'Filtrar disciplinas modificadas',284,235],['dummy',593,567,'Dummy (do nothing)',533,163],['null',379,814,'Trata NULLs de número',305,193],
  ['null',591,814,'Trata NULLs de data',531,167],['dim',859,814,'Captura NomeAreaConcentracao',748,267],['strop',859,619,'String operations',813,136],
  ['map',1118,619,'Campo TipoCursoDisciplina por extenso',979,323],['null',1429,619,'Trata NULLs de string e text',1338,226],['stop',1429,745,'Blocking Step',1397,110],
  ['seq',1429,857,'Pega data atual (do BD) 2',1347,208],['dim',1157,857,'Dimensionar D_DISCIPLINAPOS',1046,267],['grid',716,159,'Gerar sks especiais',659,158],
  ['seq',1044,159,'Pega data atual (do BD)',970,194],['upd',1396,159,'Inserir sks especiais em D_DISCIPLINAPOS',1239,358],['grid',758,327,'Dados para CTL_CARGADIMENSIONAL',615,330],
  ['seq',1077,327,'Pega data atual (do BD) 3',995,208],['var',1321,327,'Nome da Transformação',1243,199],['block',1322,455,'Espera Dimensionar D_DISCIPLINAPOS',1179,329],
  ['upd',902,455,'Atualiza CTL_CARGADIMENSIONAL',774,301]];
// Hops: [path, arrow direction, arrow base x, base y, length]
const hops = [
  ['M763 182.500H1045','r',926,182,23],['M1091 182.500H1398','r',1269,182,23],['M805 350.500H1079','r',962,350,23],['M1124 350.500H1321','r',1233,350,23],
  ['M1345.500 374V433M1346.500 433V457','d',1344,406,27],['M1324 479.500H949','l',1099,479,23],['M405.500 238V281M404.500 281V331','d',403,279,25],
  ['M404.500 378V454','d',403,408,25],['M404.500 501V568','d',403,524,25],['M427 591.500H593','r',514,591,23],['M403.500 614V814','d',402,724,26],
  ['M426 838.500H593','r',513,837,26],['M639 838.500H859','r',762,837,26],['M883.500 814V666','u',882,735,24],['M906 643.500H1118','r',1024,643,24],
  ['M1165 643.500H1429','r',1317,643,24],['M1452.500 666V747','d',1452,695,24],['M1452.500 792V859','d',1452,815,23],['M1429 881.500H1204','l',1300,881,23]];
const head = (d, x, y, n) => d === 'r' ? `M${x} ${y-5}v10L${x+n} ${y}z` : d === 'l' ? `M${x} ${y-5}v9L${x-n} ${y}z` : d === 'd' ? `M${x-5} ${y}h10L${x+1} ${y+n}z` : `M${x-5} ${y}h10L${x+1} ${y-n}z`;
const lines = hops.map(h => `<path d="${h[0]}"/>`).join(''), heads = hops.map(([, ...a]) => `<path d="${head(...a)}" stroke="none"/>`).join('');
const label = "absolute whitespace-nowrap font-['Liberation_Sans','Arial',sans-serif] text-[18px] leading-5";
const lf = `data-f="18px 'Liberation Sans'"`;
el('canvas').innerHTML =
 `<svg class="absolute inset-0 h-[818px] w-[1364px]" viewBox="${OX} ${OY} 1364 818">
   <g transform="translate(5 6)" stroke="#ececec" fill="#e4e4e4" shape-rendering="crispEdges">${lines}${heads}${nodes.map(n => `<rect x="${n[1]+.5}" y="${n[2]+.5}" width="46" height="46" fill="none"/>`).join('')}</g>
   <path d="M452 711H833V786L818 802H452z" fill="#e0e0e0"/>
 </svg>` +
 nodes.map(([, , y, t, x, w]) => `<div class="${label} [text-shadow:6px_6px_0_#f2f2f2]" style="left:${x-OX}px;top:${y+54-OY}px"><span data-w="${w}" ${lf}>${t}</span></div>`).join('') +
 `<svg class="absolute inset-0 h-[818px] w-[1364px]" viewBox="${OX} ${OY} 1364 818">
   <g stroke="#000" fill="#000" shape-rendering="crispEdges">${lines}${heads}</g>
   ${nodes.map(([i, x, y]) => `<rect x="${x+.5}" y="${y+.5}" width="46" height="46" fill="#fff"/><use href="#n-${i}" x="${x}" y="${y}" width="47" height="47"/><rect x="${x+.5}" y="${y+.5}" width="46" height="46" fill="none" stroke="#000" shape-rendering="crispEdges"/>`).join('')}
   <circle cx="495" cy="597" r="10" fill="#fbeeee"/><circle cx="489" cy="590.500" r="10.300" fill="#c83038"/><circle cx="489" cy="590.500" r="5.500" fill="#fff" stroke="#e89090" stroke-width=".7"/><path d="M484.500 587l9 7.500" stroke="#c83038" stroke-width="3.500"/>
   <path d="M401 694l5 6 13-12-5-1-8 7z" fill="#eaf6ea"/><path d="M394 688l4-3 6 4 7-8 4 2-12 14z" fill="#28943c" stroke="#187028" stroke-width=".6"/>
   <path d="M446.500 705.500H827.500V782.500L813.500 796.500H446.500z" fill="#ffa500" stroke="#666"/><path d="M827.500 782.500H813.500V796.500z" fill="#f0f0f0" stroke="#666"/>
 </svg>` +
 [['É preciso tratar o número antes, pois aqui',713,337],['o codare pode ser nulo, fazendo com',734,300],['que o lookup ocorra sobre um valor nulo',755,322]].map(([t, y, w]) => `<div class="${label}" style="left:${453-OX}px;top:${y-OY}px"><span data-w="${w}" ${lf}>${t}</span></div>`).join('');

// Tracking adjusted so every label takes its nominal width
const ctx = document.createElement('canvas').getContext('2d');
for (const s of document.querySelectorAll('[data-w]')) {
  ctx.font = s.dataset.f || "12px 'Noto Sans'";
  const t = s.textContent;
  s.style.letterSpacing = ((+s.dataset.w - ctx.measureText(t).width) / t.length).toFixed(3) + 'px';
}
</script>
</body>
</html>
